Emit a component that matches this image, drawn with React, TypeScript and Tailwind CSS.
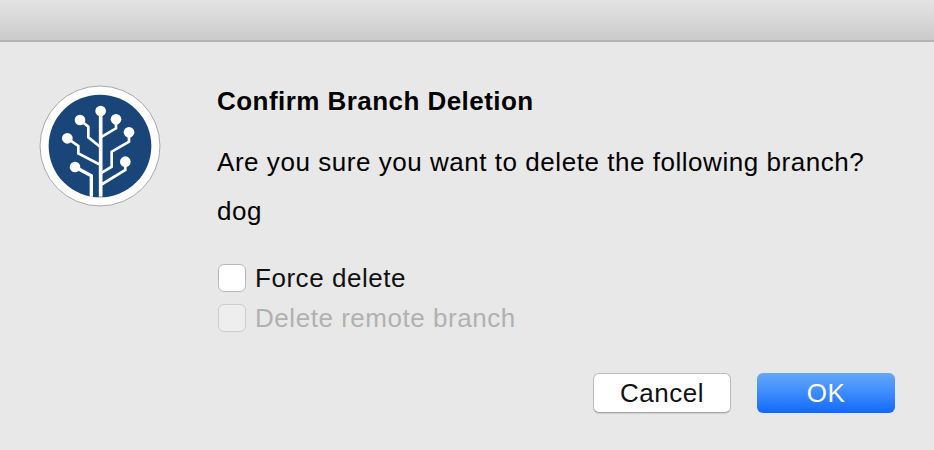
function SourceTreeLogo() {
  return (
    <svg width="122" height="122" viewBox="57 75 366 366" className="shrink-0">
      <circle cx="240" cy="258" r="180" fill="#ffffff" stroke="#a8a8a8" strokeWidth="3" />
      <circle cx="240" cy="258" r="154" fill="#1a4578" />
      <g fill="none" stroke="#ffffff" strokeWidth="8" strokeLinejoin="miter">
        <path d="M242 155V410" strokeWidth="11" />
        <path d="M165 321L214 347V410" strokeWidth="10" />
        <path d="M180 180L205 200V232L242 262" />
        <path d="M288 178V205L242 232" />
        <path d="M327 217V245L275 275V320L242 340" />
        <path d="M142 235L175 258V280L242 315" />
        <path d="M316 305V330L242 375" />
      </g>
      <g fill="#ffffff">
        <circle cx="242" cy="153" r="16" />
        <circle cx="180" cy="180" r="16" />
        <circle cx="288" cy="178" r="16" />
        <circle cx="327" cy="217" r="16" />
        <circle cx="142" cy="235" r="16" />
        <circle cx="316" cy="305" r="16" />
        <circle cx="165" cy="321" r="16" />
      </g>
    </svg>
  )
}

export default function App() {
  return (
    <div className="flex h-[450px] w-[934px] flex-col overflow-hidden bg-[#e8e8e8] font-['Liberation_Sans',Arial,sans-serif] text-[26px] tracking-[0.54px] text-[#111111]">
      {/* Title bar */}
      <div className="h-[42px] shrink-0 border-b-2 border-[#b4b4b4] bg-gradient-to-b from-[#e4e4e4] to-[#cbcbcb]" />

      <div className="flex flex-1 pl-[39px] pr-[39px]">
        <div className="w-[178px] shrink-0 pt-[43px]">
          <SourceTreeLogo />
        </div>

        <div className="flex flex-1 flex-col">
          <h1 className="mt-[44px] text-[26px] leading-[30px] font-bold tracking-[0.45px] text-black">Confirm Branch Deletion</h1>
          <p className="mt-[31px] leading-[30px] text-black">Are you sure you want to delete the following branch?</p>
          <p className="mt-[19px] leading-[30px] text-black">dog</p>

          <div className="mt-[38px] flex h-[28px] items-center gap-[9px]">
            <span className="ml-[1px] h-[28px] w-[28px] rounded-[6px] border border-[#b9b9b9] bg-white" />
            <span>Force delete</span>
          </div>
          <div className="mt-[12px] flex h-[28px] items-center gap-[9px] text-[#b1b1b1]">
            <span className="ml-[1px] h-[28px] w-[28px] rounded-[6px] border border-[#cdcdcd] bg-[#eeeeee]" />
            <span>Delete remote branch</span>
          </div>

          <div className="mt-[41px] flex justify-end gap-[26px]">
            <button className="h-[40px] w-[138px] rounded-[6px] border border-[#bdbdbd] border-b-[#a5a5a5] bg-white text-[26px] tracking-[0.5px] text-[#111111] shadow-[0_1px_1px_rgba(0,0,0,0.1)]">
              Cancel
            </button>
            <button className="h-[40px] w-[138px] rounded-[6px] bg-gradient-to-b from-[#63a8fb] to-[#0f68fd] text-[26px] tracking-[0.5px] text-white">
              OK
            </button>
          </div>
        </div>
      </div>
    </div>
  )
}
